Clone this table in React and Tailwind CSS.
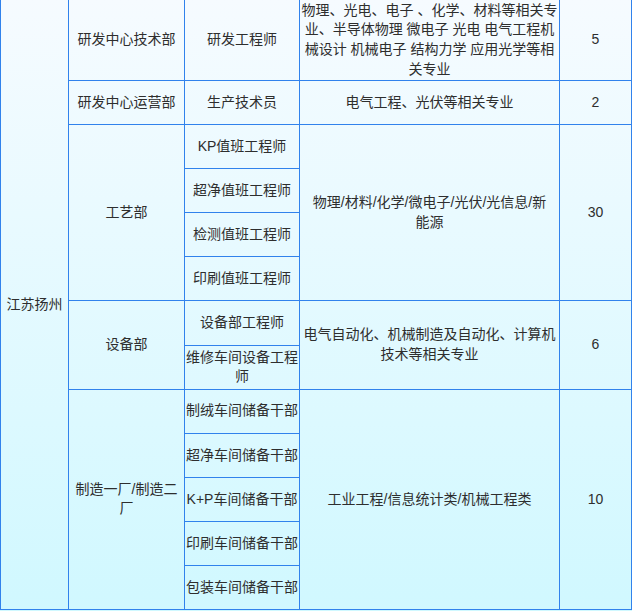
export default function App() {
  const cell =
    "flex items-center justify-center text-center bg-fixed bg-linear-to-b from-[#f6fbff] to-[#d0f8ff]";
  return (
    <div className="w-[632px] h-[611px] bg-linear-to-b from-[#f6fbff] to-[#d0f8ff] font-['Liberation_Sans','Noto_Sans_CJK_SC',sans-serif] text-[14px] leading-[19.6px] text-[#2e2e2e]">
      <div className="grid grid-cols-[67px_115px_114px_259px_71px] grid-rows-[80px_repeat(12,43.1px)] gap-px bg-[#3182ec] px-px pb-px">
        <div className={`${cell} col-start-1 row-start-1 row-end-14`}>江苏扬州</div>

        <div className={`${cell} col-start-2 row-start-1`}>研发中心技术部</div>
        <div className={`${cell} col-start-3 row-start-1`}>研发工程师</div>
        <div className={`${cell} col-start-4 row-start-1 flex-col whitespace-nowrap`}>
          <span>物理、光电、电子 、化学、材料等相关专</span>
          <span>业、半导体物理 微电子 光电 电气工程机</span>
          <span>械设计 机械电子 结构力学 应用光学等相</span>
          <span>关专业</span>
        </div>
        <div className={`${cell} col-start-5 row-start-1`}>5</div>

        <div className={`${cell} col-start-2 row-start-2`}>研发中心运营部</div>
        <div className={`${cell} col-start-3 row-start-2`}>生产技术员</div>
        <div className={`${cell} col-start-4 row-start-2`}>电气工程、光伏等相关专业</div>
        <div className={`${cell} col-start-5 row-start-2`}>2</div>

        <div className={`${cell} col-start-2 row-start-3 row-end-7`}>工艺部</div>
        <div className={`${cell} col-start-3 row-start-3`}>KP值班工程师</div>
        <div className={`${cell} col-start-3 row-start-4`}>超净值班工程师</div>
        <div className={`${cell} col-start-3 row-start-5`}>检测值班工程师</div>
        <div className={`${cell} col-start-3 row-start-6`}>印刷值班工程师</div>
        <div className={`${cell} col-start-4 row-start-3 row-end-7 flex-col whitespace-nowrap`}>
          <span>物理/材料/化学/微电子/光伏/光信息/新</span>
          <span>能源</span>
        </div>
        <div className={`${cell} col-start-5 row-start-3 row-end-7`}>30</div>

        <div className={`${cell} col-start-2 row-start-7 row-end-9`}>设备部</div>
        <div className={`${cell} col-start-3 row-start-7`}>设备部工程师</div>
        <div className={`${cell} col-start-3 row-start-8 flex-col whitespace-nowrap`}>
          <span>维修车间设备工程</span>
          <span>师</span>
        </div>
        <div className={`${cell} col-start-4 row-start-7 row-end-9 flex-col whitespace-nowrap`}>
          <span>电气自动化、机械制造及自动化、计算机</span>
          <span>技术等相关专业</span>
        </div>
        <div className={`${cell} col-start-5 row-start-7 row-end-9`}>6</div>

        <div className={`${cell} col-start-2 row-start-9 row-end-14 flex-col whitespace-nowrap`}>
          <span>制造一厂/制造二</span>
          <span>厂</span>
        </div>
        <div className={`${cell} col-start-3 row-start-9`}>制绒车间储备干部</div>
        <div className={`${cell} col-start-3 row-start-10`}>超净车间储备干部</div>
        <div className={`${cell} col-start-3 row-start-11`}>K+P车间储备干部</div>
        <div className={`${cell} col-start-3 row-start-12`}>印刷车间储备干部</div>
        <div className={`${cell} col-start-3 row-start-13`}>包装车间储备干部</div>
        <div className={`${cell} col-start-4 row-start-9 row-end-14`}>工业工程/信息统计类/机械工程类</div>
        <div className={`${cell} col-start-5 row-start-9 row-end-14`}>10</div>
      </div>
    </div>
  );
}
